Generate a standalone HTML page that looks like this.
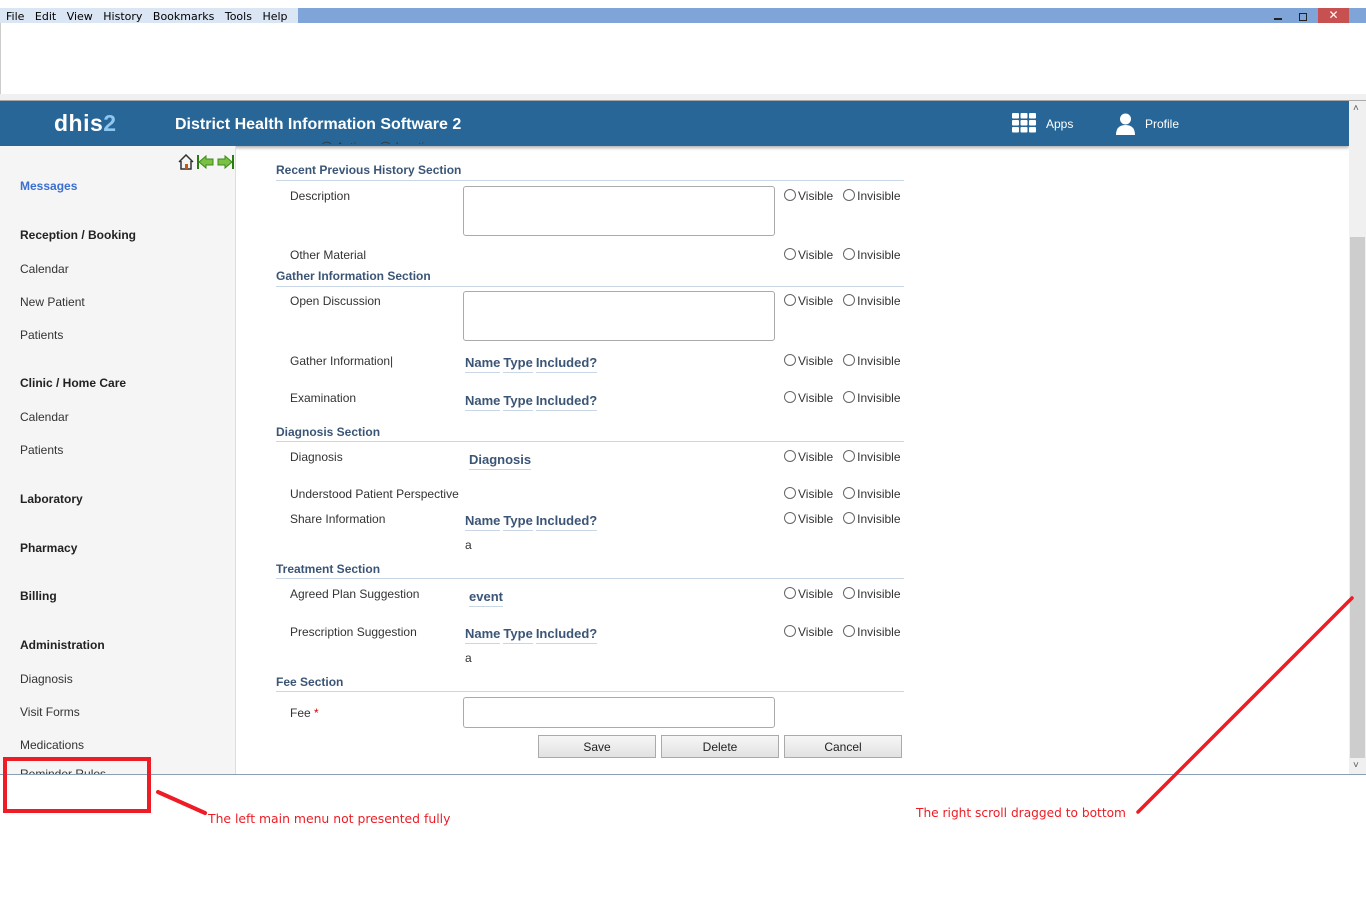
<!DOCTYPE html>
<html><head><meta charset="utf-8"><style>
*{margin:0;padding:0;box-sizing:border-box}
body{width:1366px;height:911px;position:relative;background:#fff;font-family:"Liberation Sans",Arial,sans-serif;overflow:hidden}
.a{position:absolute;white-space:nowrap}
.t{font-size:12px;color:#333}
.s{font-size:12px;font-weight:bold;color:#3b5577}
.m{font-size:12px;font-weight:bold;color:#222}
.hl{position:absolute;left:276px;width:628px;height:1px;background:#c8d6e6}
.r{position:absolute;font-size:12px;color:#333;white-space:nowrap}
.r i{display:inline-block;width:12px;height:12px;border:1px solid #666;border-radius:50%;vertical-align:-1px;margin-right:2px;background:#fff}
.ta{position:absolute;left:463px;width:312px;height:50px;border:1px solid #aaa;border-radius:3px}
.th{position:absolute;font-size:13px;font-weight:bold;color:#3b5577}
.th span{border-bottom:1px solid #c8d6e6;padding-bottom:2px;margin-right:3px}
.btn{position:absolute;top:735px;width:118px;height:23px;border:1px solid #aaa;background:linear-gradient(#f6f6f6,#e2e2e2);font-size:12px;color:#222;text-align:center;line-height:22px}
</style></head><body>
<div class="a" style="left:0;top:8px;width:1366px;height:15px;background:#7fa5d8"></div>
<div class="a" style="left:0;top:8px;width:298px;height:15px;background:#dbe6f5"></div>
<div class="a" style="left:6px;top:10px;color:#000;font-family:'DejaVu Sans',sans-serif;font-size:11px">File&nbsp;&nbsp; Edit&nbsp;&nbsp; View&nbsp;&nbsp; History&nbsp;&nbsp; Bookmarks&nbsp;&nbsp; Tools&nbsp;&nbsp; Help</div>
<div class="a" style="left:1274px;top:18px;width:8px;height:2px;background:#222"></div>
<div class="a" style="left:1299px;top:13px;width:8px;height:8px;border:1.5px solid #222"></div>
<div class="a" style="left:1318px;top:8px;width:31px;height:15px;background:#c75050;color:#fff;text-align:center;font-size:12px;line-height:15px">✕</div>
<div class="a" style="left:0;top:23px;width:1366px;height:71px;background:#fff;border-left:1px solid #ccc"></div>
<div class="a" style="left:0;top:94px;width:1366px;height:7px;background:#f0f0f0;border-bottom:1px solid #aaa"></div>
<div class="a" style="left:0;top:101px;width:1349px;height:45px;background:#276696;box-shadow:0 2px 3px rgba(0,0,0,.3)"></div>
<div class="a" style="left:54px;top:110px;font-size:23px;font-weight:bold;color:#fff;letter-spacing:.5px">dhis<span style="color:#8ec6f0">2</span></div>
<div class="a" style="left:175px;top:116px;font-size:16px;font-weight:bold;color:#fff">District Health Information Software 2</div>
<svg class="a" style="left:1012px;top:113px" width="24" height="20"><g fill="#fff"><rect x="0" y="0" width="7" height="5.5" rx="1"/><rect x="8.5" y="0" width="7" height="5.5" rx="1"/><rect x="17" y="0" width="7" height="5.5" rx="1"/><rect x="0" y="7" width="7" height="5.5" rx="1"/><rect x="8.5" y="7" width="7" height="5.5" rx="1"/><rect x="17" y="7" width="7" height="5.5" rx="1"/><rect x="0" y="14" width="7" height="5.5" rx="1"/><rect x="8.5" y="14" width="7" height="5.5" rx="1"/><rect x="17" y="14" width="7" height="5.5" rx="1"/></g></svg>
<div class="a" style="left:1046px;top:117px;font-size:12px;color:#fff">Apps</div>
<svg class="a" style="left:1115px;top:113px" width="21" height="22"><circle cx="10.5" cy="6" r="5.5" fill="#fff"/><path d="M1 22 Q1 12 10.5 12 Q20 12 20 22Z" fill="#fff"/></svg>
<div class="a" style="left:1145px;top:117px;font-size:12px;color:#fff">Profile</div>
<div class="a" style="left:1349px;top:101px;width:17px;height:673px;background:#f0f0f0"></div>
<div class="a" style="left:1350px;top:237px;width:15px;height:521px;background:#cdcdcd"></div>
<div class="a" style="left:1353px;top:103px;font-size:10px;color:#555">˄</div>
<div class="a" style="left:1353px;top:760px;font-size:10px;color:#555">˅</div>
<div class="a" style="left:0;top:146px;width:236px;height:628px;background:#f5f5f5;border-right:1px solid #ddd"></div>
<svg class="a" style="left:178px;top:154px" width="56" height="16"><path d="M1 8 L8 1 L15 8 M3 7 V15 H13 V7" fill="none" stroke="#333" stroke-width="1.5"/><rect x="7" y="10" width="3" height="5" fill="#c55a11"/><path d="M20 1 V15" stroke="#2a7a10" stroke-width="2"/><path d="M21 8 L28 2 V5 H35 V11 H28 V14Z" fill="#7bc043" stroke="#3a8a1a"/><path d="M55 1 V15" stroke="#2a7a10" stroke-width="2"/><path d="M54 8 L47 2 V5 H40 V11 H47 V14Z" fill="#7bc043" stroke="#3a8a1a"/></svg>
<div class="a" style="left:20px;top:179px;font-size:12px;font-weight:bold;color:#3a6ed0">Messages</div>
<div class="a m" style="left:20px;top:228px">Reception / Booking</div>
<div class="a t" style="left:20px;top:262px">Calendar</div>
<div class="a t" style="left:20px;top:295px">New Patient</div>
<div class="a t" style="left:20px;top:328px">Patients</div>
<div class="a m" style="left:20px;top:376px">Clinic / Home Care</div>
<div class="a t" style="left:20px;top:410px">Calendar</div>
<div class="a t" style="left:20px;top:443px">Patients</div>
<div class="a m" style="left:20px;top:492px">Laboratory</div>
<div class="a m" style="left:20px;top:541px">Pharmacy</div>
<div class="a m" style="left:20px;top:589px">Billing</div>
<div class="a m" style="left:20px;top:638px">Administration</div>
<div class="a t" style="left:20px;top:672px">Diagnosis</div>
<div class="a t" style="left:20px;top:705px">Visit Forms</div>
<div class="a t" style="left:20px;top:738px">Medications</div>
<div class="a t" style="left:20px;top:767px;height:7px;overflow:hidden">Reminder Rules</div>
<div class="a t" style="left:320px;top:146px;height:4px;overflow:hidden;top:140px">◯ Active &nbsp; ◯ Inactive</div>
<div class="a s" style="left:276px;top:163px">Recent Previous History Section</div>
<div class="hl" style="top:180px"></div>
<div class="a t" style="left:290px;top:189px">Description</div>
<div class="ta" style="top:186px"></div>
<div class="a t" style="left:290px;top:248px">Other Material</div>
<div class="a s" style="left:276px;top:269px">Gather Information Section</div>
<div class="hl" style="top:286px"></div>
<div class="a t" style="left:290px;top:294px">Open Discussion</div>
<div class="ta" style="top:291px"></div>
<div class="a t" style="left:290px;top:354px">Gather Information|</div>
<div class="th" style="left:465px;top:355px"><span>Name</span><span>Type</span><span>Included?</span></div>
<div class="a t" style="left:290px;top:391px">Examination</div>
<div class="th" style="left:465px;top:393px"><span>Name</span><span>Type</span><span>Included?</span></div>
<div class="a s" style="left:276px;top:425px">Diagnosis Section</div>
<div class="hl" style="top:441px"></div>
<div class="a t" style="left:290px;top:450px">Diagnosis</div>
<div class="th" style="left:469px;top:452px"><span>Diagnosis</span></div>
<div class="a t" style="left:290px;top:487px">Understood Patient Perspective</div>
<div class="a t" style="left:290px;top:512px">Share Information</div>
<div class="th" style="left:465px;top:513px"><span>Name</span><span>Type</span><span>Included?</span></div>
<div class="a t" style="left:465px;top:538px">a</div>
<div class="a s" style="left:276px;top:562px">Treatment Section</div>
<div class="hl" style="top:578px"></div>
<div class="a t" style="left:290px;top:587px">Agreed Plan Suggestion</div>
<div class="th" style="left:469px;top:589px"><span>event</span></div>
<div class="a t" style="left:290px;top:625px">Prescription Suggestion</div>
<div class="th" style="left:465px;top:626px"><span>Name</span><span>Type</span><span>Included?</span></div>
<div class="a t" style="left:465px;top:651px">a</div>
<div class="a s" style="left:276px;top:675px">Fee Section</div>
<div class="hl" style="top:691px"></div>
<div class="a t" style="left:290px;top:706px">Fee <span style="color:#d00">*</span></div>
<div class="ta" style="top:697px;height:31px"></div>
<div class="btn" style="left:538px">Save</div>
<div class="btn" style="left:661px">Delete</div>
<div class="btn" style="left:784px">Cancel</div>
<div class="r" style="left:784px;top:189px"><i></i>Visible&nbsp;&nbsp; <i></i>Invisible</div>
<div class="r" style="left:784px;top:248px"><i></i>Visible&nbsp;&nbsp; <i></i>Invisible</div>
<div class="r" style="left:784px;top:294px"><i></i>Visible&nbsp;&nbsp; <i></i>Invisible</div>
<div class="r" style="left:784px;top:354px"><i></i>Visible&nbsp;&nbsp; <i></i>Invisible</div>
<div class="r" style="left:784px;top:391px"><i></i>Visible&nbsp;&nbsp; <i></i>Invisible</div>
<div class="r" style="left:784px;top:450px"><i></i>Visible&nbsp;&nbsp; <i></i>Invisible</div>
<div class="r" style="left:784px;top:487px"><i></i>Visible&nbsp;&nbsp; <i></i>Invisible</div>
<div class="r" style="left:784px;top:512px"><i></i>Visible&nbsp;&nbsp; <i></i>Invisible</div>
<div class="r" style="left:784px;top:587px"><i></i>Visible&nbsp;&nbsp; <i></i>Invisible</div>
<div class="r" style="left:784px;top:625px"><i></i>Visible&nbsp;&nbsp; <i></i>Invisible</div>
<div class="a" style="left:0;top:774px;width:1366px;height:1px;background:#8aa0b8"></div>
<div class="a" style="left:3px;top:757px;width:148px;height:56px;border:4px solid #ee1c24"></div>
<svg class="a" style="left:0;top:0" width="1366" height="911"><line x1="158" y1="792" x2="205" y2="813" stroke="#ee1c24" stroke-width="4" stroke-linecap="round"/><line x1="1352" y1="598" x2="1138" y2="812" stroke="#ee1c24" stroke-width="3.5" stroke-linecap="round"/></svg>
<div class="a" style="left:208px;top:811px;color:#ee1c24;font-family:'DejaVu Sans',sans-serif;font-size:12.4px">The left main menu not presented fully</div>
<div class="a" style="left:916px;top:806px;font-size:12.2px;color:#ee1c24;font-family:'DejaVu Sans',sans-serif">The right scroll dragged to bottom</div>
</body></html>
